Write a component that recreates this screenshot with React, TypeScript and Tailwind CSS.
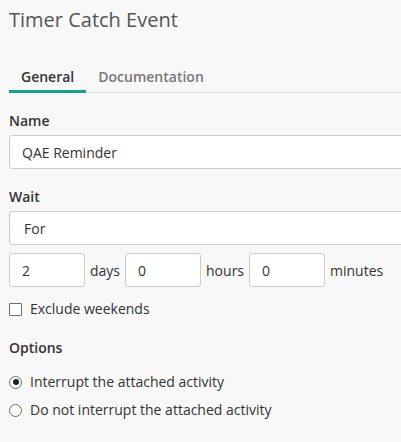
import React from "react";

const FONT = { fontFamily: '"Open Sans", "Noto Sans", sans-serif' };

function Field({ value, className = "" }: { value: string; className?: string }) {
  return (
    <div
      className={`h-[34px] rounded-[3px] border border-[#cccccc] bg-white flex items-center text-[14px] text-[#333333] ${className}`}
    >
      {value}
    </div>
  );
}

function Radio({ checked, label }: { checked?: boolean; label: string }) {
  return (
    <div className="flex items-center h-5 gap-[8px]">
      <span className="w-[13px] h-[13px] rounded-full border border-[#6f6f6f] bg-white flex items-center justify-center">
        {checked && <span className="w-[6px] h-[6px] rounded-full bg-[#222222]" />}
      </span>
      <span className="text-[14px] leading-5 text-[#333333]">{label}</span>
    </div>
  );
}

export default function App() {
  const [tab] = React.useState("general");

  return (
    <div
      className="w-[401px] h-[442px] overflow-hidden bg-[#f8f8f8] text-[#333333]"
      style={FONT}
    >
      <h1 className="pt-[6px] px-[9px] text-[20px] leading-[28px] text-[#555555] whitespace-nowrap">
        Timer Catch Event
      </h1>

      <div className="mt-[25px] ml-[9px] w-[420px] flex border-b border-[#dddddd]">
        <div
          className={`-mb-px px-3 pt-2 pb-[3px] border-b-[3px] text-[14px] leading-5 font-semibold ${
            tab === "general"
              ? "border-[#12a38a] text-[#333333]"
              : "border-transparent text-[#777777]"
          }`}
        >
          General
        </div>
        <div className="-mb-px px-3 pt-2 pb-[3px] border-b-[3px] border-transparent text-[14px] leading-5 font-semibold text-[#777777]">
          Documentation
        </div>
      </div>

      <div className="px-[9px]">
        <div className="mt-[18px] text-[14px] leading-5 font-semibold">Name</div>
        <Field value="QAE Reminder" className="mt-[4px] w-[420px] pl-3" />

        <div className="mt-[18px] text-[14px] leading-5 font-semibold">Wait</div>
        <Field value="For" className="mt-[4px] w-[420px] pl-[14px]" />

        <div className="mt-[8px] flex items-center gap-[5px] text-[14px] whitespace-nowrap">
          <Field value="2" className="w-[76px] pl-3" />
          <span>days</span>
          <Field value="0" className="w-[76px] pl-3" />
          <span>hours</span>
          <Field value="0" className="w-[76px] pl-3" />
          <span>minutes</span>
        </div>

        <div className="mt-[12px] flex items-center h-5 gap-[8px]">
          <span className="w-[13px] h-[13px] border border-[#6f6f6f] bg-white rounded-[1px]" />
          <span className="text-[14px] leading-5">Exclude weekends</span>
        </div>

        <div className="mt-[19px] text-[14px] leading-5 font-semibold">Options</div>

        <div className="mt-[14px] flex flex-col gap-[8px]">
          <Radio checked label="Interrupt the attached activity" />
          <Radio label="Do not interrupt the attached activity" />
        </div>
      </div>
    </div>
  );
}
